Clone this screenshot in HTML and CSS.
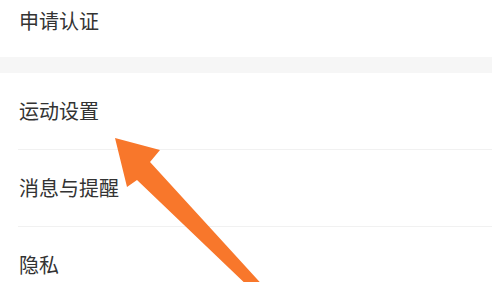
FILE: index.html
```
<!DOCTYPE html>
<html lang="zh">
<head>
<meta charset="utf-8">
<link rel="stylesheet" href="styles.css">
</head>
<body>
<div class="page">
  <div class="section first">
    <div class="row top">申请认证</div>
  </div>
  <div class="band"></div>
  <div class="section">
    <div class="row">运动设置</div>
    <div class="row">消息与提醒</div>
    <div class="row">隐私</div>
  </div>
  <svg class="arrow" width="492" height="282" viewBox="0 0 492 282">
    <polygon points="115,138 160,150 150,162 267,290 252,290 137,180 127,187" fill="#f8772b"/>
  </svg>
</div>
</body>
</html>
```
FILE: styles.css
```
html, body {
  margin: 0;
  padding: 0;
  background: #ffffff;
}
.page {
  position: relative;
  width: 492px;
  height: 282px;
  overflow: hidden;
  font-family: "Noto Sans CJK SC", "Noto Sans", sans-serif;
  color: #333333;
}
.section {
  padding-left: 18px;
}
.row {
  height: 76px;
  display: flex;
  align-items: center;
  padding-left: 1px;
  font-size: 20px;
  line-height: 28px;
  border-bottom: 1px solid #f1f1f1;
}
.row.top {
  height: 57px;
  box-sizing: border-box;
  align-items: flex-start;
  padding-top: 7px;
  border-bottom: none;
}
.band {
  height: 16px;
  background: #f6f6f6;
}
.arrow {
  position: absolute;
  left: 0;
  top: 0;
}
```
